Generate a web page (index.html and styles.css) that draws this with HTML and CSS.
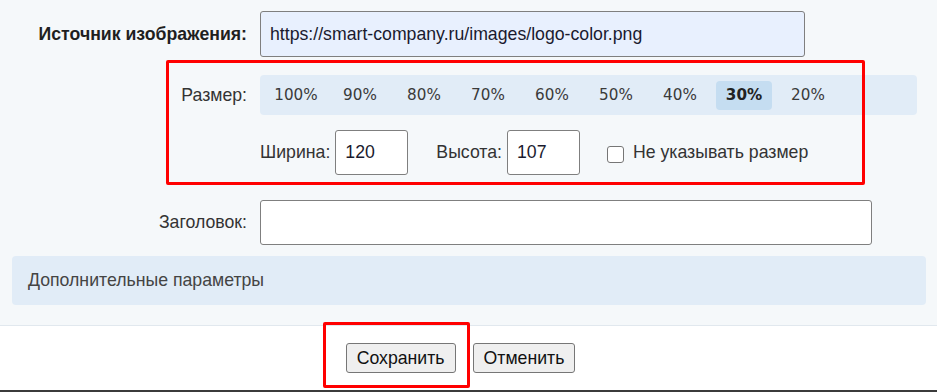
FILE: index.html
```html
<!DOCTYPE html>
<html lang="ru">
<head>
    <meta charset="UTF-8">
    <title>Свойства изображения</title>
    <link rel="stylesheet" href="styles.css">
</head>
<body>
    <div class="page">
        <div class="form">
            <div class="row row-src">
                <label class="lbl lbl-bold">Источник изображения:</label>
                <input class="inp inp-url" type="text" value="https://smart-company.ru/images/logo-color.png">
            </div>

            <div class="row row-size">
                <label class="lbl">Размер:</label>
                <div class="sizes">
                    <span class="size">100%</span>
                    <span class="size">90%</span>
                    <span class="size">80%</span>
                    <span class="size">70%</span>
                    <span class="size">60%</span>
                    <span class="size">50%</span>
                    <span class="size">40%</span>
                    <span class="size active">30%</span>
                    <span class="size">20%</span>
                </div>
            </div>

            <div class="row row-dims">
                <span></span>
                <div class="dims">
                    <label class="lbl">Ширина:</label>
                    <input class="inp inp-num" type="text" value="120">
                    <label class="lbl lbl-gap">Высота:</label>
                    <input class="inp inp-num" type="text" value="107">
                    <label class="check">
                        <input type="checkbox" class="check-box">
                        <span>Не указывать размер</span>
                    </label>
                </div>
            </div>

            <div class="row row-title">
                <label class="lbl">Заголовок:</label>
                <input class="inp inp-title" type="text" value="">
            </div>

            <div class="extra">Дополнительные параметры</div>

            <!-- highlight around size settings -->
            <div class="mark mark-size"></div>
        </div>

        <div class="actions">
            <button class="btn">Сохранить</button>
            <button class="btn">Отменить</button>

            <!-- highlight around save button -->
            <div class="mark mark-save"></div>
        </div>
    </div>
</body>
</html>
```

FILE: styles.css
```css
/* General */
body {
    margin: 0;
    font-family: 'Liberation Sans', Arial, sans-serif;
    color: #222;
    background: #ffffff;
}

.page {
    position: relative;
    width: 937px;
    height: 392px;
    overflow: hidden;
}

/* Form area */
.form {
    position: relative;
    background: #f5f8fa;
    padding: 11px 11px 20px 12px;
    border-bottom: 1px solid #e1e8ee;
}

.row {
    display: grid;
    grid-template-columns: 235px 1fr;
    column-gap: 13px;
    align-items: center;
}

.row-size {
    margin-top: 18px;
}

.row-dims {
    margin-top: 15px;
}

.row-title {
    margin-top: 25px;
}

.lbl {
    font-size: 17.7px;
    color: #333;
    text-align: right;
    white-space: nowrap;
}

.lbl-bold {
    font-weight: bold;
    color: #1f1f1f;
}

/* Inputs */
.inp {
    box-sizing: border-box;
    height: 46px;
    border: 1px solid #7f7f7f;
    border-radius: 3px;
    background: #ffffff;
    font-family: 'Liberation Sans', Arial, sans-serif;
    font-size: 17.7px;
    color: #1a1a2e;
    padding: 0 9px;
    margin: 0;
}

.inp-url {
    width: 545px;
    background: #e8f0fe;
}

.inp-title {
    width: 612px;
    height: 45px;
}

.inp-num {
    width: 73px;
    height: 45px;
}

/* Size presets */
.sizes {
    display: flex;
    align-items: center;
    gap: 8px;
    width: 657px;
    box-sizing: border-box;
    height: 40px;
    padding: 0 8px;
    background: #e1ecf7;
    border-radius: 4px;
}

.size {
    width: 56px;
    height: 29px;
    line-height: 29px;
    text-align: center;
    font-family: 'DejaVu Sans', Verdana, sans-serif;
    font-size: 15.2px;
    color: #3a3a3a;
    border-radius: 4px;
}

.size.active {
    background: #c5ddf1;
    font-weight: bold;
    color: #222;
}

/* Width / height row */
.dims {
    display: flex;
    align-items: center;
}

.dims .inp-num {
    margin-left: 5px;
}

.lbl-gap {
    margin-left: 28px;
}

.check {
    display: flex;
    align-items: center;
    margin-left: 27px;
    font-size: 17.7px;
    color: #333;
}

.check-box {
    appearance: none;
    -webkit-appearance: none;
    width: 17px;
    height: 17px;
    margin: 4px 9px 0 0;
    border: 1px solid #767676;
    border-radius: 3px;
    background: #ffffff;
}

/* Additional parameters */
.extra {
    margin-top: 11px;
    height: 49px;
    line-height: 49px;
    padding-left: 16px;
    background: #e1ecf7;
    border-radius: 4px;
    font-size: 17.7px;
    color: #444;
}

/* Buttons */
.actions {
    position: relative;
    display: flex;
    justify-content: center;
    gap: 17px;
    padding: 17px 16px 0 0;
    height: 47px;
    border-bottom: 2px solid #3b3b3b;
}

.btn {
    height: 30px;
    padding: 0 10px;
    font-family: 'Liberation Sans', Arial, sans-serif;
    font-size: 17.7px;
    color: #111;
    background: #efefef;
    border: 1px solid #767676;
    border-radius: 3px;
}

/* Red highlight boxes */
.mark {
    position: absolute;
    border: 3px solid #ff0000;
    border-radius: 2px;
    pointer-events: none;
}

.mark-size {
    left: 166px;
    top: 60px;
    width: 693px;
    height: 119px;
}

.mark-save {
    left: 323px;
    top: -4px;
    width: 141px;
    height: 60px;
}
```
